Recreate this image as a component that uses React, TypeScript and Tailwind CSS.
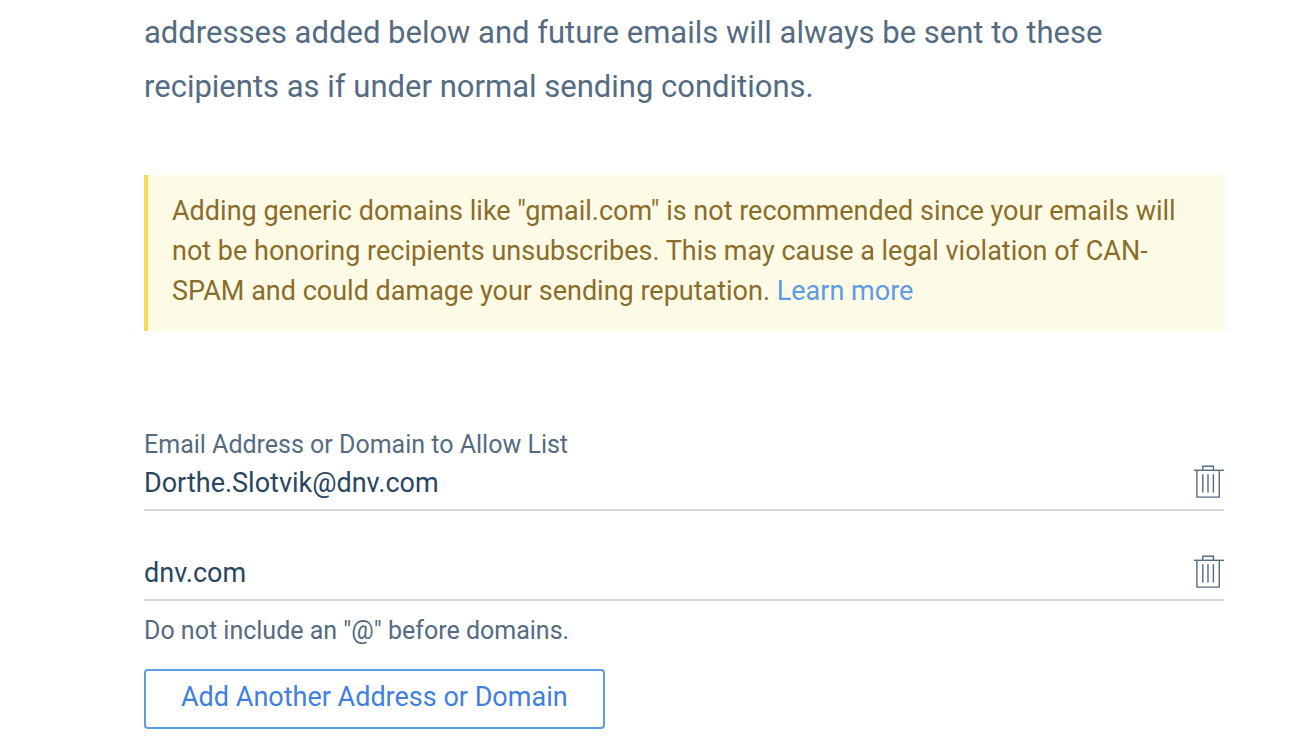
type AllowListEntry = {
  id: string;
  value: string;
};

const entries: AllowListEntry[] = [
  { id: "address-1", value: "Dorthe.Slotvik@dnv.com" },
  { id: "address-2", value: "dnv.com" },
];

const TrashIcon = () => (
  <svg
    width="30"
    height="36"
    viewBox="0 0 30 36"
    fill="none"
    stroke="#546b81"
    strokeWidth="1.4"
  >
    <path d="M0 5.3h30" />
    <path d="M8.8 5V1.2h10.6V5" />
    <path d="M2.9 5.5v26.6h22.4V5.5" />
    <path d="M8.8 9.2v18.2M14 9.2v18.2M19.4 9.2v18.2" />
  </svg>
);

const EntryRow = ({ entry }: { entry: AllowListEntry }) => (
  <div className="flex items-center border-b-2 border-[#d5d9de] pb-1">
    <input
      id={entry.id}
      type="text"
      defaultValue={entry.value}
      aria-label={entry.value}
      className="h-11 min-w-0 flex-1 bg-transparent text-[27px] text-[#294661] outline-none"
    />
    <button type="button" aria-label={`Remove ${entry.value}`}>
      <TrashIcon />
    </button>
  </div>
);

const App = () => {
  return (
    <main className="bg-white pt-1.5 pr-[90px] pb-5 pl-36 font-['Roboto',sans-serif] text-[#546b81]">
      <p className="text-[31px] leading-[54px]">
        addresses added below and future emails will always be sent to these
        recipients as if under normal sending conditions.
      </p>

      <div className="mt-[61px] border-l-4 border-[#f7d957] bg-[#fdfae6] px-6 pt-4 pb-5 text-[27px] leading-10 text-[#8a6d2b]">
        Adding generic domains like "gmail.com" is not recommended since your
        emails will not be honoring recipients unsubscribes. This may cause a
        legal violation of CAN-SPAM and could damage your sending reputation.{" "}
        <a href="#" className="text-[#5d9be5]">
          Learn more
        </a>
      </div>

      <form className="mt-[98px]">
        <label htmlFor="address-1" className="block text-[25px] leading-8">
          Email Address or Domain to Allow List
        </label>
        <div className="flex flex-col gap-10">
          {entries.map((entry) => (
            <EntryRow key={entry.id} entry={entry} />
          ))}
        </div>
        <p className="mt-3 text-[25px] leading-9">
          Do not include an "@" before domains.
        </p>
        <button
          type="button"
          className="mt-5 h-[60px] rounded-sm border-2 border-[#5d9be5] px-[35px] pb-1 text-[27px] leading-10 text-[#3f80df]"
        >
          Add Another Address or Domain
        </button>
      </form>
    </main>
  );
};

export default App;
